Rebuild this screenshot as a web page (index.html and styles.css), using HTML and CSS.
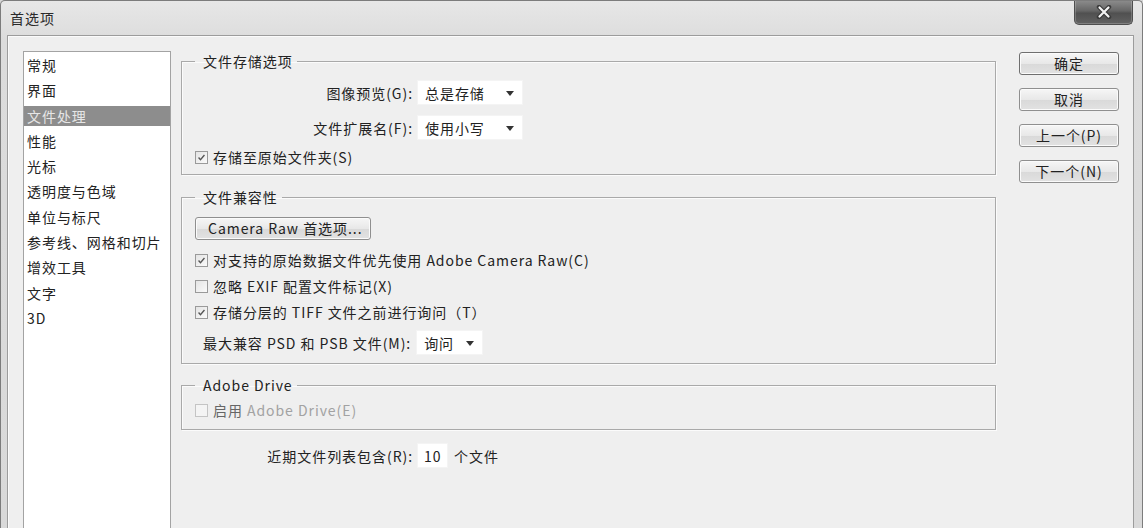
FILE: index.html
```html
<!DOCTYPE html>
<html lang="zh-CN">
<head>
    <meta charset="UTF-8">
    <title>首选项</title>
    <link rel="stylesheet" href="styles.css">
</head>
<body>
<div class="window">
    <div class="titlebar">
        <span class="title">首选项</span>
        <div class="close-btn">
            <svg width="16" height="14" viewBox="0 0 16 14"><path d="M3 2 L13 12 M13 2 L3 12" stroke="#3a3a3a" stroke-width="4.5" stroke-linecap="round"/><path d="M3.5 2.5 L12.5 11.5 M12.5 2.5 L3.5 11.5" stroke="#f4f4f4" stroke-width="2.2" stroke-linecap="round"/></svg>
        </div>
    </div>
    <div class="client">
        <ul class="nav-list">
            <li>常规</li>
            <li>界面</li>
            <li class="active">文件处理</li>
            <li>性能</li>
            <li>光标</li>
            <li>透明度与色域</li>
            <li>单位与标尺</li>
            <li>参考线、网格和切片</li>
            <li>增效工具</li>
            <li>文字</li>
            <li>3D</li>
        </ul>

        <div class="main">
            <fieldset class="group group-save">
                <legend>文件存储选项</legend>
                <div class="field-row">
                    <label class="field-label">图像预览(G):</label>
                    <div class="select select-wide">总是存储<span class="arrow"></span></div>
                </div>
                <div class="field-row">
                    <label class="field-label">文件扩展名(F):</label>
                    <div class="select select-wide">使用小写<span class="arrow"></span></div>
                </div>
                <div class="check-row first-check">
                    <span class="checkbox checked"><svg viewBox="0 0 13 13"><path d="M3 6.5 L5.3 9 L10 3.5" fill="none" stroke="#555" stroke-width="1.6"/></svg></span>
                    存储至原始文件夹(S)
                </div>
            </fieldset>

            <fieldset class="group group-compat">
                <legend>文件兼容性</legend>
                <div class="btn btn-raw">Camera Raw 首选项...</div>
                <div class="check-row">
                    <span class="checkbox checked"><svg viewBox="0 0 13 13"><path d="M3 6.5 L5.3 9 L10 3.5" fill="none" stroke="#555" stroke-width="1.6"/></svg></span>
                    对支持的原始数据文件优先使用 Adobe Camera Raw(C)
                </div>
                <div class="check-row">
                    <span class="checkbox"></span>
                    忽略 EXIF 配置文件标记(X)
                </div>
                <div class="check-row">
                    <span class="checkbox checked"><svg viewBox="0 0 13 13"><path d="M3 6.5 L5.3 9 L10 3.5" fill="none" stroke="#555" stroke-width="1.6"/></svg></span>
                    存储分层的 TIFF 文件之前进行询问（T）
                </div>
                <div class="psd-row">
                    <label>最大兼容 PSD 和 PSB 文件(M):</label>
                    <div class="select select-narrow">询问<span class="arrow"></span></div>
                </div>
            </fieldset>

            <fieldset class="group group-drive">
                <legend>Adobe Drive</legend>
                <div class="check-row disabled">
                    <span class="checkbox"></span>
                    <span class="enable-word">启用</span>&nbsp;Adobe Drive(E)
                </div>
            </fieldset>

            <div class="field-row recent-row">
                <label class="field-label">近期文件列表包含(R):</label>
                <div class="num-input">10</div>
                <span class="unit">个文件</span>
            </div>
        </div>

        <div class="actions">
            <div class="btn btn-default">确定</div>
            <div class="btn">取消</div>
            <div class="btn">上一个(P)</div>
            <div class="btn">下一个(N)</div>
        </div>
    </div>
</div>
</body>
</html>
```

FILE: styles.css
```css
* { box-sizing: border-box; }
body { margin: 0; background: #d6d6d6; font-family: "Noto Sans CJK SC", "Noto Sans", sans-serif; font-size: 14px; letter-spacing: 0.95px; color: #222; }

.window { width: 1143px; height: 528px; display: flex; flex-direction: column; border: 1px solid #7c7c7c; border-bottom: none; border-radius: 5px 5px 0 0; background: linear-gradient(#e7e7e7, #dcdcdc 40px, #d9d9d9); overflow: hidden; }
.titlebar { height: 34px; display: flex; align-items: flex-start; flex-shrink: 0; }
.title { padding-left: 9px; line-height: 34px; color: #2a2a2a; }
.close-btn { margin-left: auto; margin-right: 9px; margin-top: -1px; width: 59px; height: 25px; border: 1px solid #4e4e4e; border-top: none; border-radius: 0 0 5px 5px; background: linear-gradient(#8e8e8e, #666 45%, #505050 55%, #626262); display: flex; align-items: center; justify-content: center; box-shadow: inset 0 0 0 1px rgba(255,255,255,0.2); }

.client { flex: 1; margin: 0 8px 0 6px; border: 1px solid #9c9c9c; border-bottom: none; background: #efefef; padding: 15px 14px 0 15px; display: flex; overflow: hidden; box-shadow: inset 1px 1px 0 #fbfbfb; }

.nav-list { list-style: none; margin: 0; padding: 3px 0 0; width: 148px; height: 520px; flex-shrink: 0; background: #fff; border: 1px solid #a3a3a3; display: flex; flex-direction: column; gap: 5.3px; }
.nav-list li { height: 20px; line-height: 20px; padding-left: 3px; white-space: nowrap; }
.nav-list li.active { background: #8d8d8d; color: #e6e6e6; }

.main { width: 815px; margin-left: 10px; padding-top: 1px; flex-shrink: 0; }
.group { margin: 0; padding: 0 12px 7px 13px; border: 1px solid #a9a9a9; box-shadow: 1px 1px 0 #fbfbfb, inset 1px 1px 0 #fbfbfb; min-inline-size: 0; }
.group legend { padding: 0 4px 0 8px; line-height: 18px; }
.group-compat { margin-top: 13px; padding-bottom: 8px; }
.group-drive { margin-top: 12px; padding-bottom: 9px; }

.field-row { display: flex; align-items: center; height: 25px; }
.group-save .field-row { margin-top: 10px; }
.field-label { width: 222px; text-align: right; padding-right: 4px; flex-shrink: 0; }
.select { position: relative; height: 25px; line-height: 25px; background: #fff; padding-left: 7px; border: 1px solid #f4f4f4; }
.select-wide { width: 106px; }
.select-narrow { width: 67px; }
.arrow { position: absolute; right: 8px; top: 10px; width: 0; height: 0; border-left: 4px solid transparent; border-right: 4px solid transparent; border-top: 5px solid #333; }

.check-row { display: flex; align-items: center; height: 20px; margin-top: 6px; white-space: nowrap; }
.first-check { margin-top: 7px; }
.checkbox { width: 13px; height: 13px; margin-right: 5px; flex-shrink: 0; border: 1px solid #9a9a9a; background: linear-gradient(135deg, #e4e4e4, #fafafa); display: inline-flex; }
.checkbox svg { width: 11px; height: 11px; }
.disabled { color: #a2a2a2; }
.disabled .checkbox { border-color: #c4c4c4; background: #f4f4f4; }
.enable-word { color: #666; }

.btn { height: 23px; line-height: 21px; text-align: center; border: 1px solid #8f8f8f; border-radius: 3px; background: linear-gradient(#f6f6f6, #e8e8e8 50%, #d9d9d9 51%, #e2e2e2); box-shadow: inset 0 0 0 1px #fbfbfb; white-space: nowrap; }
.btn-raw { width: 176px; margin-top: 11px; text-align: left; padding-left: 12px; }
.group-compat .btn-raw + .check-row { margin-top: 10px; }

.psd-row { display: flex; align-items: center; margin-top: 8px; padding-left: 8px; }
.psd-row label { padding-right: 5px; }

.recent-row { margin-top: 13px; padding-left: 14px; }
.num-input { width: 31px; height: 25px; line-height: 25px; background: #fff; padding-left: 6px; border: 1px solid #f4f4f4; }
.unit { margin-left: 6px; }

.actions { margin-left: auto; width: 100px; padding-top: 1px; display: flex; flex-direction: column; gap: 13px; }
.btn-default { border-color: #6f6f6f; }
```
